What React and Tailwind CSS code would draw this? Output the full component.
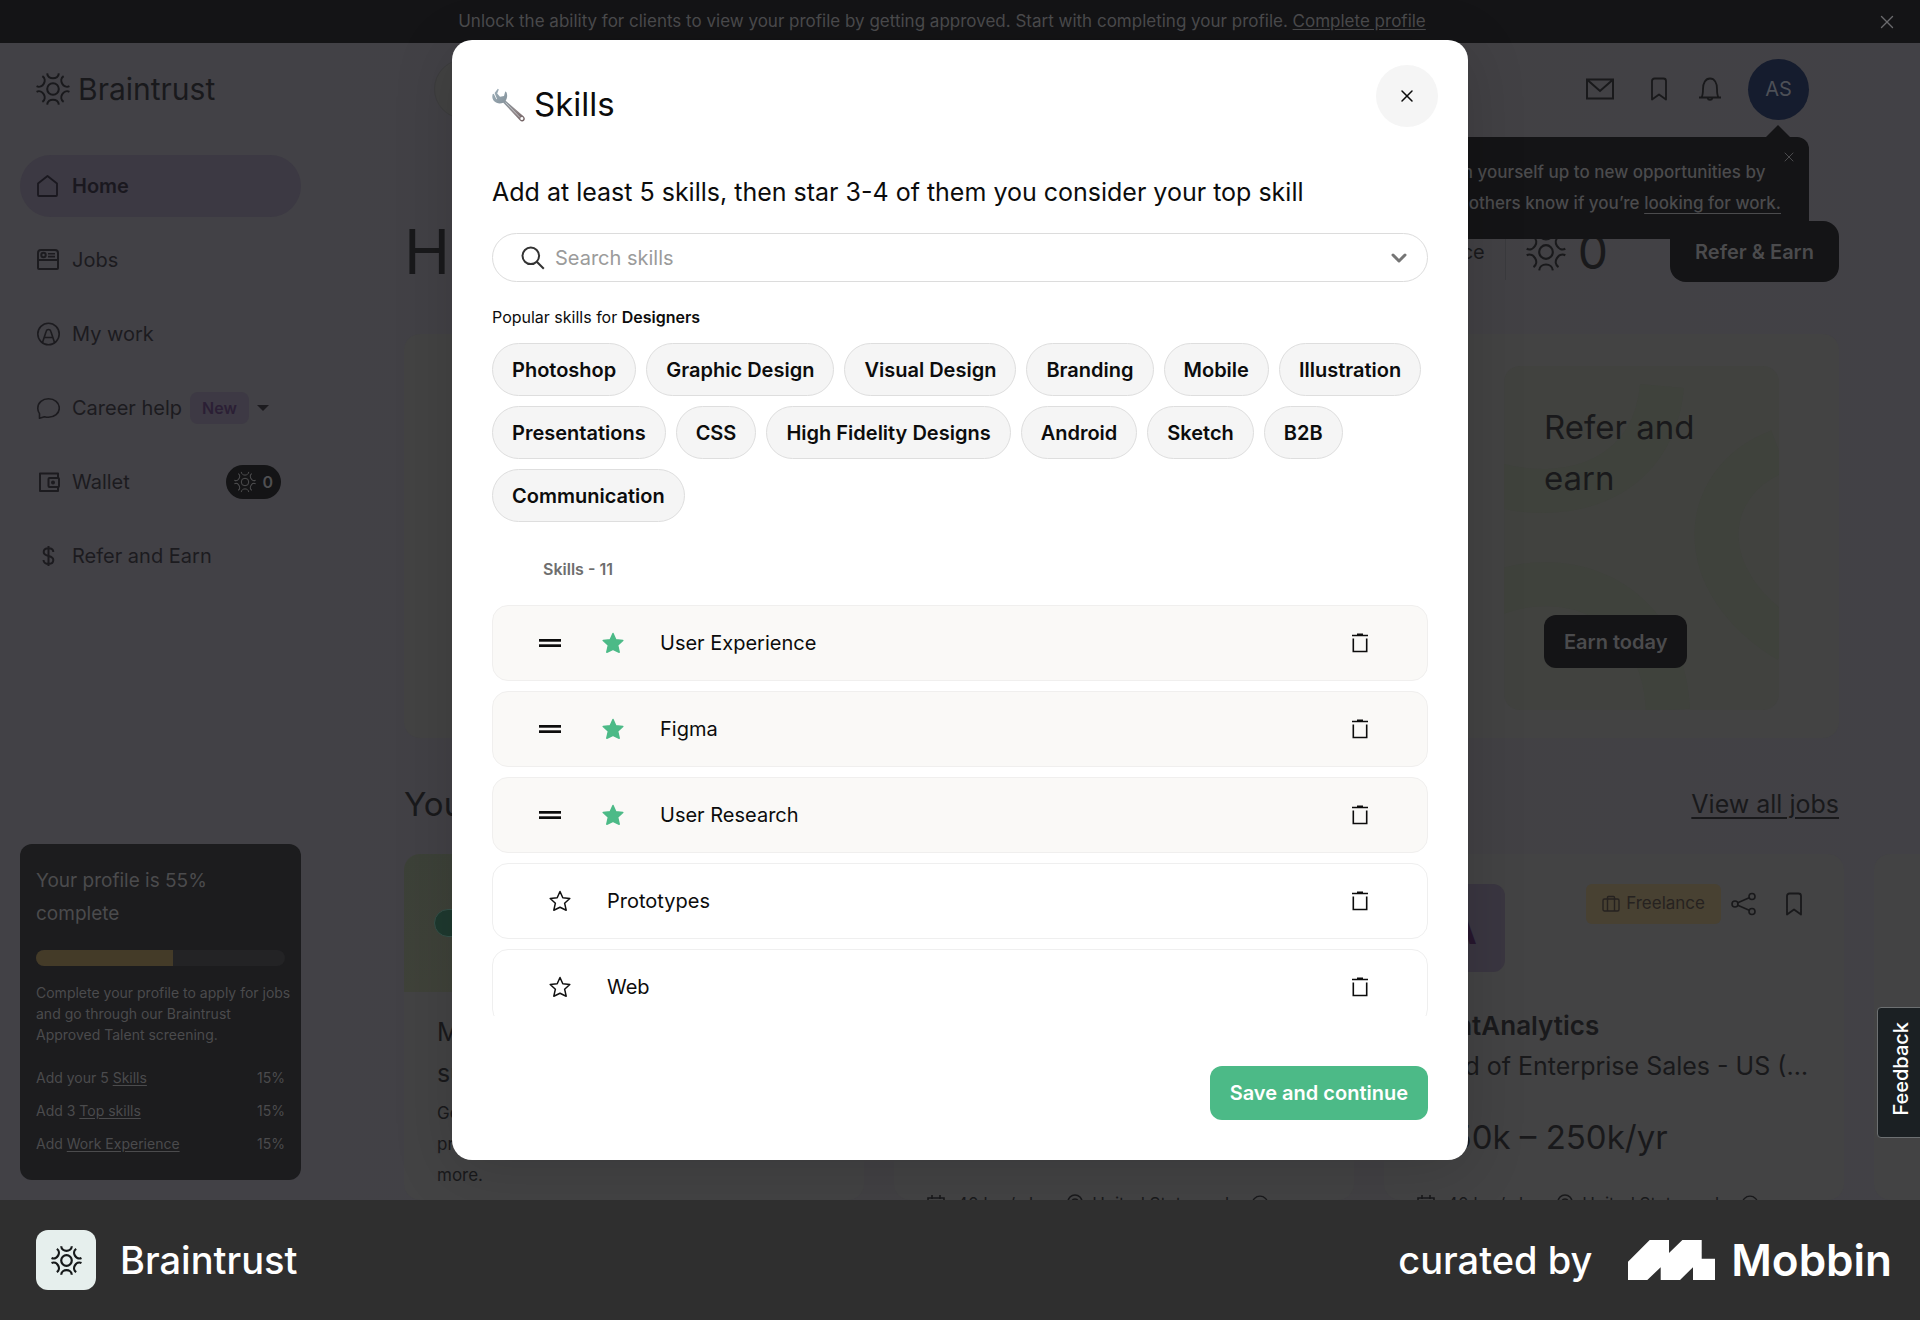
import { useState } from 'react';
import { X, ChevronDown } from 'lucide-react';

const popularSkills = [
  'Photoshop', 'Graphic Design', 'Visual Design', 'Branding', 'Mobile', 'Illustration',
  'Presentations', 'CSS', 'High Fidelity Designs', 'Android', 'Sketch', 'B2B', 'Communication',
];

const initialSkills = [
  { name: 'User Experience', top: true },
  { name: 'Figma', top: true },
  { name: 'User Research', top: true },
  { name: 'Prototypes', top: false },
  { name: 'Web', top: false },
];

const todo = [
  { before: 'Add your 5', link: 'Skills' },
  { before: 'Add 3', link: 'Top skills' },
  { before: 'Add', link: 'Work Experience' },
];

/* ---------- Icons ---------- */

const BraintrustMark = ({ className, strokeWidth = 2 }) => (
  <svg viewBox="-17 -17 34 34" className={className} fill="none" stroke="currentColor" strokeWidth={strokeWidth} aria-hidden="true">
    <circle r="5.8" />
    {[0, 60, 120, 180, 240, 300].map((deg) => (
      <path key={deg} d="M-5.8 -15.6 C-5.4 -9 5.4 -9 5.8 -15.6" transform={`rotate(${deg})`} />
    ))}
  </svg>
);

const HomeIcon = () => (
  <svg viewBox="0 0 24 24" className="size-6" fill="none" stroke="currentColor" strokeWidth="1.8" strokeLinejoin="round" aria-hidden="true">
    <path d="M2 9.5 11.5 2 21 9.5V21a1 1 0 0 1-1 1H3a1 1 0 0 1-1-1Z" />
  </svg>
);

const JobsIcon = () => (
  <svg viewBox="0 0 24 24" className="size-6" fill="none" stroke="currentColor" strokeWidth="2" aria-hidden="true">
    <path d="M2 5a3 3 0 0 1 3-3h14a3 3 0 0 1 3 3v15a1 1 0 0 1-1 1H3a1 1 0 0 1-1-1ZM2 12h20" />
    <circle cx="7.500" cy="7" r="2.200" />
    <path d="M12 5.800h7M12 8.600h7" strokeWidth="1.600" />
  </svg>
);

const WorkIcon = () => (
  <svg viewBox="0 0 24 24" className="size-6" fill="none" stroke="currentColor" strokeWidth="1.6" aria-hidden="true">
    <circle cx="12.500" cy="12" r="10.700" />
    <path d="M6.500 20.500 10.200 9.200a2.400 2.400 0 0 1 4.600 0l3.700 11.300M8.500 15.500h8" />
  </svg>
);

const ChatIcon = () => (
  <svg viewBox="0 0 24 24" className="size-6" fill="none" stroke="currentColor" strokeWidth="1.6" strokeLinejoin="round" aria-hidden="true">
    <path d="M3.500 22.300V17.600A8.800 8.800 0 0 1 1.800 12.200C1.800 6.800 6.600 2.800 12.500 2.800s10.800 4 10.800 9.300-4.800 9.200-10.800 9.200c-1.500 0-2.800-.2-4-.6Z" />
  </svg>
);

const WalletIcon = () => (
  <svg viewBox="0 0 24 24" className="size-6" fill="none" stroke="currentColor" strokeWidth="2" strokeLinejoin="round" aria-hidden="true">
    <path d="M22 8V3.500H4v17.500h18V17" />
    <rect x="12.500" y="8" width="10.500" height="9" rx="1" />
    <circle cx="17" cy="12.500" r="1" fill="currentColor" />
  </svg>
);

const DollarIcon = () => (
  <svg viewBox="0 0 24 24" className="size-6" fill="none" stroke="currentColor" strokeWidth="2" aria-hidden="true">
    <path d="M12.500 2v20M17.300 8c0-2.500-2.200-3.800-4.800-3.800S7.700 5.500 7.700 8c0 5.500 9.600 2.500 9.600 8 0 2.600-2.200 3.900-4.800 3.900S7.500 18.500 7.500 16" />
  </svg>
);

const MailIcon = () => (
  <svg viewBox="0 0 28 22" className="h-[22px] w-7" fill="none" stroke="currentColor" strokeWidth="2" aria-hidden="true">
    <path d="M1 1.500h26v19H1ZM1.500 2 14 13 26.500 2" />
  </svg>
);

const BookmarkIcon = () => (
  <svg viewBox="0 0 18 24" className="h-6 w-[18px]" fill="none" stroke="currentColor" strokeWidth="1.8" strokeLinejoin="round" aria-hidden="true">
    <path d="M2 22.500V4a2.500 2.500 0 0 1 2.500-2.500h9A2.500 2.500 0 0 1 16 4v18.500l-7-5Z" />
  </svg>
);

const BellIcon = () => (
  <svg viewBox="0 0 24 24" className="size-6" fill="none" stroke="currentColor" strokeWidth="1.8" aria-hidden="true">
    <path d="M1 20.500h22M3.500 20.500c1.300-2 1.500-4.500 1.500-8.500 0-6 2.500-10.500 7-10.500S19 6 19 12c0 4 .2 6.500 1.500 8.500M9.500 21a2.600 2.600 0 0 0 5 0" />
  </svg>
);

const ShareIcon = () => (
  <svg viewBox="0 0 26 24" className="h-6 w-[26px]" fill="none" stroke="currentColor" strokeWidth="1.6" aria-hidden="true">
    <circle cx="4" cy="12" r="3" />
    <circle cx="21" cy="4.500" r="3" />
    <circle cx="21" cy="19.500" r="3" />
    <path d="m6.800 10.800 11.400-5M6.800 13.200l11.400 5" />
  </svg>
);

const SuitcaseIcon = () => (
  <svg viewBox="0 0 18 18" className="size-[18px]" fill="none" stroke="currentColor" strokeWidth="1.400" aria-hidden="true">
    <rect x="1" y="4" width="16" height="12" rx="1.500" />
    <path d="M5.500 16V2.500a1 1 0 0 1 1-1h5a1 1 0 0 1 1 1V16" />
  </svg>
);

const CalendarIcon = () => (
  <svg viewBox="0 0 18 18" className="size-[18px]" fill="none" stroke="currentColor" strokeWidth="1.600" aria-hidden="true">
    <path d="M1 3h16v14H1ZM1 7h16M5 0v4M13 0v4" />
  </svg>
);

const PinIcon = () => (
  <svg viewBox="0 0 18 20" className="h-5 w-[18px]" fill="none" stroke="currentColor" strokeWidth="1.600" aria-hidden="true">
    <path d="M9 19C5 14.500 2 11.500 2 8a7 7 0 0 1 14 0c0 3.500-3 6.500-7 11Z" />
    <circle cx="9" cy="8" r="3" />
  </svg>
);

const PlusCircleIcon = () => (
  <svg viewBox="0 0 18 18" className="size-[18px]" fill="none" stroke="currentColor" strokeWidth="1.300" aria-hidden="true">
    <circle cx="9" cy="9" r="7.800" />
    <path d="M9 5v8M5 9h8" />
  </svg>
);

const WrenchIcon = () => (
  <svg viewBox="0 0 34 34" className="size-[34px]" aria-hidden="true">
    <defs>
      <linearGradient id="steel" x1="0" y1="0" x2="1" y2="1">
        <stop offset="0" stopColor="#9fb0ba" />
        <stop offset="0.35" stopColor="#8a98a1" />
        <stop offset="0.7" stopColor="#8f8688" />
        <stop offset="1" stopColor="#6f5e60" />
      </linearGradient>
    </defs>
    <path
      fill="url(#steel)"
      fillRule="evenodd"
      d="M5.800 .8 6.800 1.500 5.200 5.600 8 8.800 12 8l1.200-4.500 1.100.6c1.500 3 .9 6.300-.6 8.600L31.800 28.400c1.400 1.500 1.300 3.200.2 4.300s-2.900 1-4.200-.5L11.300 14.800C8 16 4.300 15.600 2 13 .2 11 0 8.600.6 6.200l1.200-.4 2.600 5.400L5 11 2.600 5Zm24 28.300a1.500 1.500 0 1 0 .1 3 1.500 1.500 0 0 0-.1-3Z"
    />
    <path d="M13.500 14.500 28 29.500" stroke="#d9dee1" strokeWidth="1" opacity="0.7" />
  </svg>
);

const SearchIcon = () => (
  <svg viewBox="0 0 24 24" className="size-6" fill="none" stroke="#333" strokeWidth="2" aria-hidden="true">
    <circle cx="9.800" cy="9.800" r="8.300" />
    <path d="m15.800 15.800 7 7" />
  </svg>
);

const StarIcon = ({ filled }) => (
  <svg viewBox="0 0 22 22" className={filled ? 'size-[22px] text-[#4cba87]' : 'size-[22px] text-[#111]'} aria-hidden="true">
    <path
      d="M11 1.500 13.800 7.800 20.800 8.500 15.600 13.200 17.200 20.200 11 17.300 4.800 20.200 6.400 13.200 1.200 8.500 8.200 7.800Z"
      fill={filled ? 'currentColor' : 'none'}
      stroke="currentColor"
      strokeWidth="1.500"
      strokeLinejoin="round"
    />
  </svg>
);

const DragIcon = () => (
  <svg viewBox="0 0 22 8" className="h-2 w-[22px]" fill="#0c0c0c" aria-hidden="true">
    <rect width="22" height="2.700" />
    <rect y="5.300" width="22" height="2.700" />
  </svg>
);

const TrashIcon = () => (
  <svg viewBox="0 0 18 20" className="h-5 w-[18px]" fill="none" stroke="#0c0c0c" strokeWidth="1.600" aria-hidden="true">
    <path d="M1 2.500h16M6 1.200h6M2.300 5.500v13h13.400v-13" />
  </svg>
);

const MobbinMark = () => (
  <svg viewBox="0 0 87 40" className="h-10 w-[87px]" fill="#fff" aria-hidden="true">
    <path d="M0 21.700 21.700 0H41v13L54.400 0h19.300v18.700H87V40H65V27.200L52 40H32.700V27.200L19.300 40H0Z" />
  </svg>
);

/* ---------- Page behind the dialog ---------- */

const NavItem = ({ icon, label, active, children }) => (
  <a
    href="#"
    className={
      active
        ? 'flex h-[62px] items-center gap-3 rounded-full bg-[#3c3943] px-4 text-xl font-semibold text-[#1a181f]'
        : 'flex h-[62px] items-center gap-3 rounded-full px-4 text-xl text-[#1c1b1f]'
    }
  >
    {icon}
    <span>{label}</span>
    {children}
  </a>
);

const Sidebar = () => (
  <aside className="flex w-[321px] shrink-0 flex-col px-5 pb-5">
    <a href="#" className="flex h-[92px] items-center gap-2 px-4 text-[30px] text-[#19191c]">
      <BraintrustMark className="size-[34px]" />
      Braintrust
    </a>
    <nav className="mt-5 flex flex-col gap-3">
      <NavItem icon={<HomeIcon />} label="Home" active />
      <NavItem icon={<JobsIcon />} label="Jobs" />
      <NavItem icon={<WorkIcon />} label="My work" />
      <NavItem icon={<ChatIcon />} label="Career help">
        <span className="-ml-1 rounded-lg bg-[#3d3944] px-3 py-1 text-base font-semibold text-[#2b1f35]">New</span>
        <svg viewBox="0 0 12 6" className="-ml-1 h-1.5 w-3" fill="currentColor" aria-hidden="true"><path d="M0 0h12L6 6Z" /></svg>
      </NavItem>
      <NavItem icon={<WalletIcon />} label="Wallet">
        <span className="ml-auto mr-1 flex h-[34px] items-center gap-1.5 rounded-full bg-[#141416] px-2 text-base font-semibold text-[#4f4f51]">
          <BraintrustMark className="size-[22px]" strokeWidth={1.5} />0
        </span>
      </NavItem>
      <NavItem icon={<DollarIcon />} label="Refer and Earn" />
    </nav>

    <section className="mt-auto rounded-xl bg-[#1c1c1e] px-4 py-5 text-[#4b4b4d]">
      <h2 className="text-[19px] leading-[33px]">Your profile is 55% complete</h2>
      <div className="mt-5 h-4 overflow-hidden rounded-full bg-[#232325]">
        <div className="h-full w-[55%] bg-[#443b28]" />
      </div>
      <p className="-mr-2 mt-4 text-sm leading-[21px]">
        Complete your profile to apply for jobs
        <br />
        and go through our Braintrust
        <br />
        Approved Talent screening.
      </p>
      <ul className="mt-4 text-sm leading-[33px]">
        {todo.map((item) => (
          <li key={item.link} className="flex justify-between">
            <span>{item.before} <a href="#" className="underline underline-offset-2">{item.link}</a></span>
            <span>15%</span>
          </li>
        ))}
      </ul>
    </section>
  </aside>
);

const Meta = () => (
  <div className="flex shrink-0 items-center text-[17px] leading-6">
    <CalendarIcon />
    <span className="ml-3">40 hrs/wk</span>
    <span className="ml-7"><PinIcon /></span>
    <span className="ml-2">United States only</span>
    <span className="ml-3"><PlusCircleIcon /></span>
  </div>
);

const JobCard = ({ initials, company, title, pay }) => (
  <article className="flex w-[460px] shrink-0 flex-col rounded-2xl bg-[#434344] px-[33px] pt-[30px]">
    <div className="flex shrink-0 items-start">
      <div className="flex size-[88px] items-center justify-center rounded-xl bg-[#3a3641] text-[44px] font-semibold text-[#27172e]">{initials}</div>
      <div className="ml-auto flex items-center">
        <span className="flex h-10 items-center gap-1.5 rounded-md bg-[#484132] px-4 text-[17px] text-[#262220]"><SuitcaseIcon />Freelance</span>
        <button type="button" aria-label="Share" className="ml-2.5"><ShareIcon /></button>
        <button type="button" aria-label="Save job" className="ml-7 mr-2"><BookmarkIcon /></button>
      </div>
    </div>
    <h3 className="mt-[34px] shrink-0 text-[26px] font-semibold leading-10">{company}</h3>
    <p className="shrink-0 truncate text-[25px] leading-10">{title}</p>
    <p className="mb-7 mt-6 shrink-0 whitespace-nowrap text-[33px] leading-[54px]">{pay}</p>
    <Meta />
  </article>
);

const Page = () => (
  <div className="flex min-w-0 flex-1 flex-col overflow-hidden bg-gradient-to-r from-[#424146] via-[#424143] to-[#424146] pl-[83px] pr-[81px]">
    <header className="flex h-[92px] shrink-0 items-center gap-8 px-[30px]">
      <input
        type="search"
        aria-label="Search"
        className="h-[60px] w-[620px] rounded-full border border-[#3d3d3e] bg-[#424242]"
      />
      <button type="button" aria-label="Messages" className="ml-auto"><MailIcon /></button>
      <button type="button" aria-label="Saved" className="ml-1"><BookmarkIcon /></button>
      <button type="button" aria-label="Notifications" className="-ml-0.5"><BellIcon /></button>
      <div className="relative -ml-1.5">
        <button type="button" className="flex size-[61px] items-center justify-center rounded-full bg-[#151c2e] text-xl text-[#4d5057]">AS</button>
        <div className="absolute right-0 top-[78px] w-max rounded-xl rounded-b-none bg-[#141416] px-7 py-5 text-center text-[17px] font-medium leading-[31px] text-[#4b4b4d]">
          <span className="absolute -top-3 right-[18px] size-0 border-x-[13px] border-b-[13px] border-x-transparent border-b-[#141416]" />
          <p>
            Open yourself up to new opportunities by
            <br />
            letting others know if you’re <a href="#" className="underline underline-offset-4">looking for work.</a>
          </p>
          <button type="button" aria-label="Dismiss" className="absolute right-3 top-3"><X size={16} strokeWidth={1.5} /></button>
        </div>
      </div>
    </header>

    <div className="mt-[86px] flex h-[61px] shrink-0 items-center">
      <h1 className="whitespace-nowrap text-[62px] leading-none">Hi,</h1>
      <div className="ml-auto flex items-center text-xl">
        <span>Your balance</span>
        <span className="mx-5 h-14 w-px bg-[#3a3a3d]" />
        <BraintrustMark className="size-10" strokeWidth={1.8} />
        <span className="ml-3 text-5xl">0</span>
        <a href="#" className="ml-[62px] flex h-[61px] items-center rounded-2xl bg-[#141416] px-[25px] font-semibold text-[#4b4b4d]">Refer &amp; Earn</a>
      </div>
    </div>

    <section className="mt-[52px] flex shrink-0 rounded-2xl bg-[#434343] px-[60px] pb-7 pt-8">
      <div className="relative ml-auto flex h-[344px] w-[275px] flex-col items-start overflow-hidden rounded-2xl bg-[#41423f] px-10 pt-9">
        <svg viewBox="0 0 275 344" className="absolute inset-0 size-full" fill="none" stroke="#3f423c" strokeWidth="44" aria-hidden="true">
          <path d="M-10 118C70 140 150 110 158 20" />
          <path d="M-10 228C60 200 158 230 164 344" />
          <path d="M275 85C195 115 185 215 285 275" />
        </svg>
        <h2 className="relative text-[33px] leading-[51px]">Refer and earn</h2>
        <a href="#" className="relative mb-[42px] mt-auto flex h-[53px] items-center rounded-xl bg-[#141416] px-5 text-xl font-semibold text-[#4b4b4d]">Earn today</a>
      </div>
    </section>

    <div className="mt-9 flex shrink-0 items-center justify-between leading-[60px]">
      <h2 className="text-[33px]">Your top jobs</h2>
      <a href="#" className="text-[25px] underline underline-offset-4">View all jobs</a>
    </div>

    <div className="mt-5 flex min-h-0 flex-1 gap-[30px]">
      <article className="flex w-[460px] shrink-0 flex-col overflow-hidden rounded-2xl bg-[#434344]">
        <div className="flex h-[138px] items-center bg-gradient-to-br from-[#3c4138] to-[#42433b] px-[30px]">
          <span className="h-7 w-16 rounded-full border border-[#36514a] bg-[#1e392f]" />
        </div>
        <div className="px-[33px] pt-5">
          <h3 className="text-[25px] leading-[41px]">Make your profile<br />support your goals</h3>
          <p className="mt-1 text-[17px] leading-[31px]">Get tips on building your<br />profile, applying and<br />more.</p>
        </div>
      </article>
      <JobCard initials="A" company="PointAnalytics" title="Head of Enterprise Sales" pay="$150k – 250k/yr" />
      <JobCard initials="A" company="PointAnalytics" title="Head of Enterprise Sales - US (Remote)" pay="$150k – 250k/yr" />
      <article className="w-[460px] shrink-0 rounded-2xl bg-[#434344]" />
    </div>
  </div>
);

/* ---------- Dialog ---------- */

const SkillRow = ({ skill, onStar, onRemove }) => (
  <li
    className={
      skill.top
        ? 'flex h-[76px] shrink-0 items-center rounded-2xl border border-[#f0efee] bg-[#faf9f7] pl-[46px] pr-[58px]'
        : 'flex h-[76px] shrink-0 items-center rounded-2xl border border-[#efefef] bg-white pl-14 pr-[58px]'
    }
  >
    {skill.top && <span className="mr-[41px] cursor-grab"><DragIcon /></span>}
    <button type="button" aria-label={`Star ${skill.name}`} onClick={onStar}><StarIcon filled={skill.top} /></button>
    <span className="ml-9 text-xl">{skill.name}</span>
    <button type="button" aria-label={`Remove ${skill.name}`} onClick={onRemove} className="ml-auto"><TrashIcon /></button>
  </li>
);

const SkillsDialog = () => {
  const [skills, setSkills] = useState(initialSkills);

  const toggle = (name) => setSkills(skills.map((s) => (s.name === name ? { ...s, top: !s.top } : s)));
  const remove = (name) => setSkills(skills.filter((s) => s.name !== name));

  return (
    <div role="dialog" aria-labelledby="skills-title" className="flex h-full w-full max-w-[1016px] flex-col rounded-[20px] bg-white px-10 pb-10 pt-[25px] text-[#0c0c0c] shadow-[0_10px_60px_rgba(0,0,0,0.15)]">
      <div className="flex items-start justify-between">
        <h1 id="skills-title" className="flex h-20 items-center gap-2 text-[33px]">
          <WrenchIcon />
          Skills
        </h1>
        <button type="button" aria-label="Close" className="-mr-2.5 flex size-[62px] items-center justify-center rounded-full bg-[#f5f5f5]">
          <X size={20} strokeWidth={1.8} />
        </button>
      </div>

      <p className="mt-[29px] text-[25px] leading-9">Add at least 5 skills, then star 3-4 of them you consider your top skill</p>

      <div className="mt-[23px] flex h-[49px] shrink-0 items-center rounded-full border border-[#dcdcdc] pl-7 pr-4">
        <SearchIcon />
        <input type="text" aria-label="Search skills" placeholder="Search skills" className="ml-2.5 min-w-0 flex-1 text-xl outline-none placeholder:text-[#9b9b9b]" />
        <button type="button" aria-label="Show skills"><ChevronDown size={24} strokeWidth={3} className="text-[#757575]" /></button>
      </div>

      <p className="mt-[23px] text-base leading-6">Popular skills for <strong className="font-semibold">Designers</strong></p>

      <div className="mt-[14px] flex flex-wrap gap-[10px]">
        {popularSkills.map((name) => (
          <button key={name} type="button" className="h-[53px] rounded-full border border-[#dedede] bg-[#f5f5f5] px-[19px] text-xl font-semibold">
            {name}
          </button>
        ))}
      </div>

      <h2 className="ml-[51px] mt-[35px] text-base font-semibold leading-6 text-[#6e6e6e]">Skills - 11</h2>

      <ul className="mt-6 flex min-h-0 flex-1 flex-col gap-[10px] overflow-hidden">
        {skills.map((skill) => (
          <SkillRow key={skill.name} skill={skill} onStar={() => toggle(skill.name)} onRemove={() => remove(skill.name)} />
        ))}
      </ul>

      <button type="button" className="mt-[50px] h-[54px] shrink-0 self-end rounded-xl bg-[#4cba87] px-5 text-xl font-semibold text-white">
        Save and continue
      </button>
    </div>
  );
};

const App = () => (
  <div className="flex h-screen flex-col bg-[#424146] font-['Inter',sans-serif] text-[#19191b]">
    <div className="relative flex min-h-0 flex-1 flex-col overflow-hidden">
      <div className="flex h-[43px] shrink-0 items-center bg-[#141416] text-[17px] text-[#4b4b4d]">
        <p className="flex-1 pl-2 text-center">
          Unlock the ability for clients to view your profile by getting approved. Start with completing your profile.{' '}
          <a href="#" className="underline underline-offset-2">Complete profile</a>
        </p>
        <button type="button" aria-label="Close banner" className="mr-[22px] text-[#6a6a6c]"><X size={22} strokeWidth={1.5} /></button>
      </div>
      <div className="flex min-h-0 flex-1">
        <Sidebar />
        <Page />
      </div>

      <div className="absolute inset-0 flex justify-center py-10">
        <SkillsDialog />
      </div>

      <button type="button" className="absolute -right-px top-[1007px] h-[131px] w-11 rounded-l border border-[#6d7072] bg-[#1b2023] pl-1 text-xl font-medium text-white">
        <span className="inline-block rotate-180 [writing-mode:vertical-rl]">Feedback</span>
      </button>
    </div>

    <footer className="flex h-[120px] shrink-0 items-center bg-[#2f2f2f] pl-9 pr-7 font-medium text-white">
      <span className="flex size-[60px] items-center justify-center rounded-xl bg-[#e6efed] text-[#16191a]">
        <BraintrustMark className="size-[31px]" strokeWidth={2.4} />
      </span>
      <span className="ml-6 text-[38px]">Braintrust</span>
      <span className="ml-auto mr-9 text-[38px]">curated by</span>
      <MobbinMark />
      <span className="ml-4 text-[44px] font-semibold">Mobbin</span>
    </footer>
  </div>
);

export default App;
